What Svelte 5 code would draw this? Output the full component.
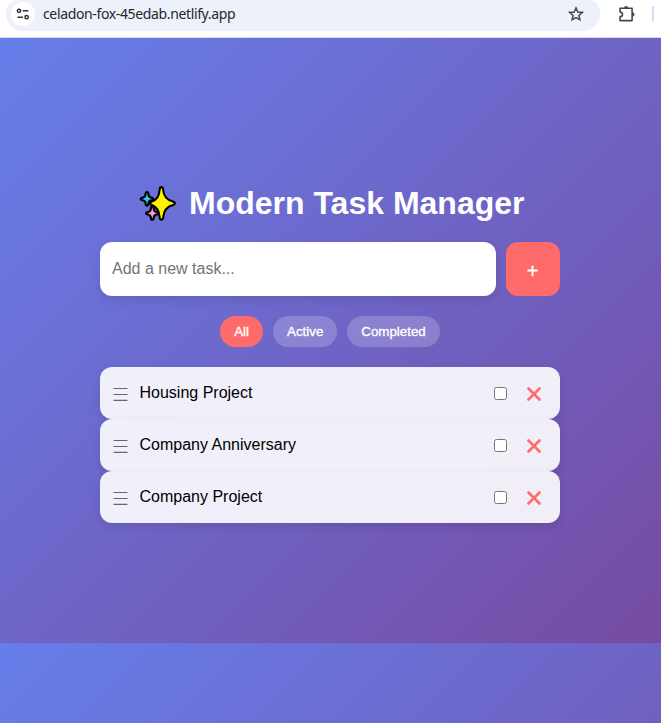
<script>
  let draft = $state('');
  let filter = $state('All');
  let tasks = $state([
    { name: 'Housing Project', done: false },
    { name: 'Company Anniversary', done: false },
    { name: 'Company Project', done: false }
  ]);
  const filters = ['All', 'Active', 'Completed'];
  const visible = $derived(
    tasks.filter((t) => filter === 'All' || (filter === 'Completed' ? t.done : !t.done))
  );

  function add() {
    if (!draft.trim()) return;
    tasks.push({ name: draft.trim(), done: false });
    draft = '';
  }
  function remove(task) {
    tasks = tasks.filter((t) => t !== task);
  }
</script>

<div class="window">
  <header class="browser">
    <div class="address">
      <span class="site">
        <svg width="14" height="12" viewBox="0 0 14 12" fill="none" stroke="#303134" stroke-width="1.5">
          <circle cx="3" cy="2.8" r="1.65" /><path d="M6.7 2.8H12.3M1.5 9.2H7" /><circle cx="10.6" cy="9.2" r="1.65" />
        </svg>
      </span>
      <span class="url">celadon-fox-45edab.netlify.app</span>
      <svg class="star" width="16" height="16" viewBox="0 0 16 16" fill="none" stroke="#45474a" stroke-width="1.5" stroke-linejoin="miter">
        <path d="M8 1.9L9.8 6L14.3 6.4L10.9 9.4L11.9 13.8L8 11.5L4.1 13.8L5.1 9.4L1.7 6.4L6.2 6Z" />
      </svg>
    </div>
    <svg class="puzzle" width="18" height="18" viewBox="0 0 18 18">
      <path d="M2 3.3H14.1V15.6H2V11.9Q4.5 11.4 4.5 9.4T2 6.9Z" fill="none" stroke="#45474a" stroke-width="1.6" stroke-linejoin="round" />
      <path d="M6.3 3A1.8 1.8 0 0 1 9.9 3ZM14.5 7.6A1.8 1.8 0 0 1 14.5 11.2Z" fill="#45474a" stroke="#45474a" stroke-width=".5" />
    </svg>
    <span class="divider"></span>
  </header>

  <main>
    <div class="manager">
      <h1>
        <svg width="38" height="37" viewBox="0 0 38 37" stroke="#000" stroke-width="2.1" stroke-linejoin="round">
          <path d="M8 7Q9.3 7 9.4 9.2Q9.7 12.2 12.2 12.6Q14.2 12.8 14.2 13.9Q14.2 15 12.2 15.2Q9.7 15.6 9.4 18.4Q9.3 20.6 8 20.6Q6.7 20.6 6.6 18.4Q6.3 15.6 3.8 15.2Q1.8 15 1.8 13.9Q1.8 12.8 3.8 12.6Q6.3 12.2 6.6 9.2Q6.7 7 8 7Z" fill="#32c5e8" />
          <path d="M13.3 21.4Q14.6 21.4 14.7 23.6Q15 26.6 17.5 27Q19.5 27.2 19.5 28.3Q19.5 29.4 17.5 29.6Q15 30 14.7 32.6Q14.6 34.8 13.3 34.8Q12 34.8 11.9 32.6Q11.6 30 9.1 29.6Q7.1 29.4 7.1 28.3Q7.1 27.2 9.1 27Q11.6 26.6 11.9 23.6Q12 21.4 13.3 21.4Z" fill="#f5a3c7" />
          <path d="M22.4 2.1Q23.9 2.1 24.1 4.5Q24.8 14.2 33.9 16.5Q36 17.1 36 18.3Q36 19.5 33.9 20Q24.9 22.6 24.2 32.2Q23.9 34.8 22.4 34.8Q20.9 34.8 20.6 32.2Q19.8 22.6 13 20Q11 19.5 11 18.3Q11 17.1 13 16.5Q20 14.2 20.7 4.5Q20.9 2.1 22.4 2.1Z" fill="#fff100" />
        </svg>
        <span>Modern Task Manager</span>
      </h1>

      <div class="entry">
        <input type="text" placeholder="Add a new task..." bind:value={draft} />
        <button class="add" onclick={add}>+</button>
      </div>

      <div class="filters">
        {#each filters as f}
          <button class:active={filter === f} onclick={() => (filter = f)}>{f}</button>
        {/each}
      </div>

      <ul>
        {#each visible as task}
          <li>
            <svg class="grip" width="15" height="14" viewBox="0 0 15 14" stroke="#67646f" stroke-width="1.2">
              <path d="M.5 1.5H14.5M.5 7.5H14.5M.5 13.4H14.5" />
            </svg>
            <span class="name">{task.name}</span>
            <input type="checkbox" bind:checked={task.done} aria-label={task.name} />
            <button class="remove" aria-label="Delete" onclick={() => remove(task)}>
              <svg width="14" height="14" viewBox="0 0 14 14" stroke="#ff6b6b" stroke-width="2.6" stroke-linecap="round">
                <path d="M1.5 1.5L12.5 12.5M12.5 1.5L1.5 12.5" />
              </svg>
            </button>
          </li>
        {/each}
      </ul>
    </div>
  </main>
</div>

<style>
  :global(body) { margin: 0; }
  .window {
    box-sizing: border-box;
    height: 723px;
    display: flex;
    flex-direction: column;
    overflow: hidden;
    font-family: "Liberation Sans", Arial, sans-serif;
  }
  .browser {
    box-sizing: border-box;
    height: 38px;
    flex: none;
    display: flex;
    align-items: flex-start;
    padding-left: 6px;
    background: #fff;
    border-bottom: 1px solid #dcdde8;
  }
  .address {
    box-sizing: border-box;
    width: 594px;
    height: 31px;
    display: flex;
    align-items: center;
    padding: 0 16px 3px 5px;
    background: #edf1fa;
    border-radius: 12px 12px 17px 17px;
  }
  .site {
    width: 24px;
    height: 24px;
    display: grid;
    place-items: center;
    border-radius: 50%;
    background: #fff;
  }
  .url {
    margin-left: 8px;
    flex: 1;
    font: 14px/20px "Noto Sans", "Open Sans", sans-serif;
    color: #25272b;
    letter-spacing: -0.36px;
  }
  .puzzle { margin: 5px 0 0 18px; }
  .divider { width: 2px; height: 15px; margin: 6px 0 0 16px; background: #d3def5; }

  main {
    flex: 1;
    box-sizing: border-box;
    padding-top: 147px;
    background: linear-gradient(135deg, #667eea, #764ba2) 0 0 / 100% 605px repeat-y;
  }
  .manager { width: 460px; margin-left: 100px; }
  h1 {
    display: flex;
    height: 37px;
    margin: 0 0 20px;
    padding-left: 39px;
    color: #fff;
    font-size: 32px;
    line-height: 37px;
    white-space: nowrap;
  }
  h1 svg { flex: none; margin-right: 12px; }
  .entry { display: flex; gap: 10px; }
  .entry input {
    box-sizing: border-box;
    width: 396px;
    height: 54px;
    padding: 12px;
    border: 0;
    outline: 0;
    border-radius: 12px;
    background: #fff;
    font: 16px "Liberation Sans", Arial, sans-serif;
    box-shadow: 0 4px 10px rgba(0, 0, 0, 0.1);
  }
  .entry input::placeholder { color: #757575; }
  button { border: 0; color: #fff; cursor: pointer; font-family: inherit; }
  .add {
    width: 54px;
    height: 54px;
    padding: 4px 1px 0 0;
    border-radius: 12px;
    background: #ff6b6b;
    font-size: 20px;
    -webkit-text-stroke: 0.3px #fff;
  }
  .filters { display: flex; justify-content: center; gap: 10px; margin: 20px 0; }
  .filters button {
    height: 31px;
    padding: 8px 14px;
    border-radius: 20px;
    background: rgba(255, 255, 255, 0.2);
    font-size: 13.333px;
    line-height: 15px;
    -webkit-text-stroke: 0.35px #fff;
  }
  .filters button.active { background: #ff6b6b; }
  ul { margin: 0; padding: 0; list-style: none; }
  li {
    box-sizing: border-box;
    height: 52px;
    display: flex;
    align-items: center;
    padding: 0 19px 0 13px;
    border-radius: 12px;
    background: rgba(255, 255, 255, 0.9);
    box-shadow: 0 4px 10px rgba(0, 0, 0, 0.1);
    color: #000;
    font-size: 16px;
  }
  .grip { margin-top: 1px; }
  .name { flex: 1; margin-left: 11.5px; line-height: 18px; }
  li input { width: 13px; height: 13px; margin: 1px 20px 0 0; }
  .remove { display: flex; padding: 0; margin-top: 2px; background: none; }
</style>
